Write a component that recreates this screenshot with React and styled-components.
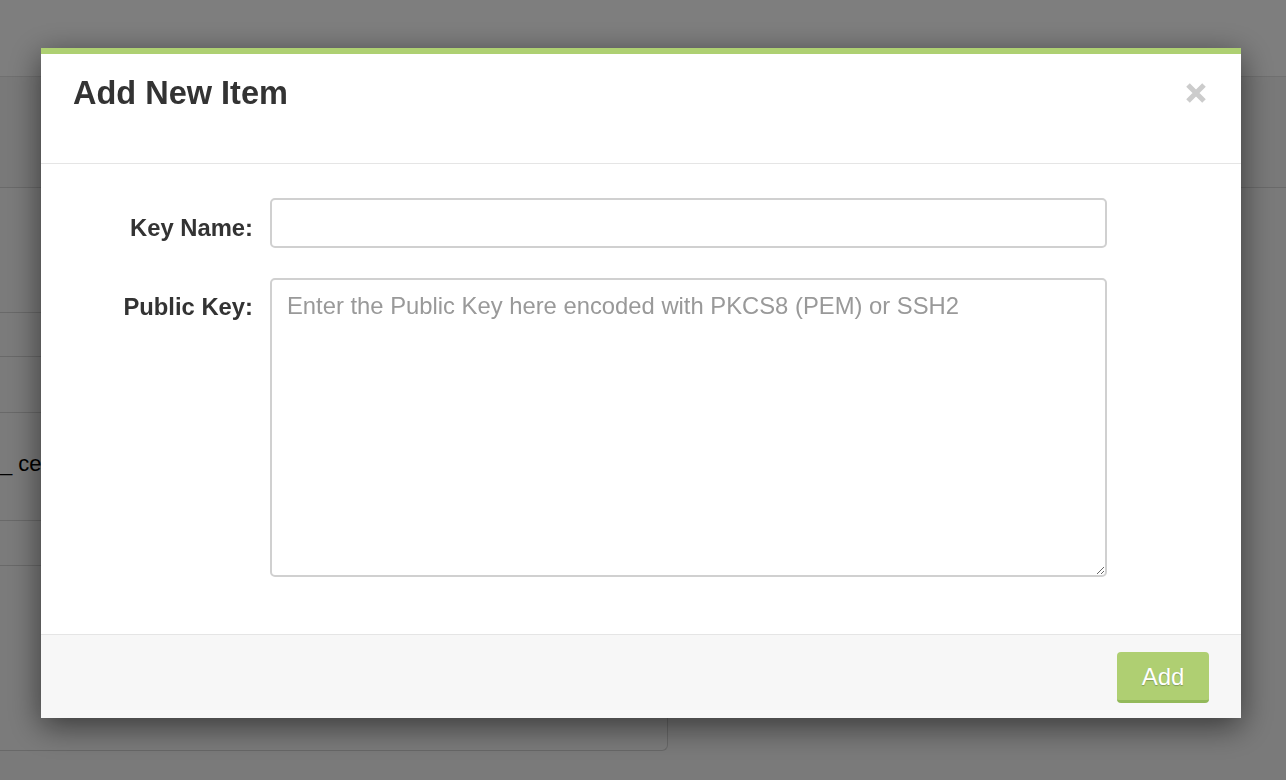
import React from "react";
import styled, { createGlobalStyle } from "styled-components";

const Global = createGlobalStyle`
  html, body { margin: 0; padding: 0; }
  body {
    font-family: "Liberation Sans", Arial, Helvetica, sans-serif;
    background: #fff;
    width: 1286px;
    height: 780px;
    overflow: hidden;
  }
  * { box-sizing: border-box; }
`;

const Page = styled.div`
  width: 1286px;
  height: 780px;
  display: flex;
  flex-direction: column;
  background: #f4f4f4;
`;

const TopBar = styled.div`
  height: 77px;
  flex: none;
  background: #fdfdfd;
  border-bottom: 1px solid #e0e0e0;
`;

const SubBar = styled.div`
  height: 111px;
  flex: none;
  background: #f2f2f2;
  border-bottom: 1px solid #d4d4d4;
`;

const Content = styled.div`
  flex: 1;
  display: flex;
`;

const Panel = styled.div`
  width: 668px;
  height: 563px;
  background: #f6f6f6;
  border: 1px solid #d0d0d0;
  border-left: none;
  border-top: none;
  border-radius: 0 0 6px 0;
  display: flex;
  flex-direction: column;
`;

const PanelRow = styled.div`
  height: ${(p) => p.$h}px;
  flex: none;
  border-bottom: 1px solid #d2d2d2;
  display: flex;
  align-items: center;
  font-size: 22px;
  color: #000;
  padding-bottom: 6px;
`;

const Overlay = styled.div`
  position: fixed;
  inset: 0;
  background: rgba(0, 0, 0, 0.5);
`;

const Modal = styled.div`
  position: fixed;
  left: 41px;
  top: 48px;
  width: 1200px;
  background: #fff;
  border-top: 6px solid #aed072;
  box-shadow: 0 8px 30px rgba(0, 0, 0, 0.55);
  display: flex;
  flex-direction: column;
`;

const Header = styled.div`
  height: 110px;
  border-bottom: 1px solid #e5e5e5;
  display: flex;
  justify-content: space-between;
  align-items: flex-start;
  padding: 22px 32px 0 32px;
`;

const Title = styled.h4`
  margin: 0;
  font-size: 32.5px;
  line-height: 34px;
  font-weight: 700;
  color: #333;
`;

const Close = styled.button`
  border: none;
  background: none;
  padding: 0;
  margin-top: 6px;
  margin-right: 2px;
  width: 22px;
  height: 22px;
  cursor: pointer;
  display: flex;
`;

const Body = styled.div`
  height: 470px;
  padding: 34px 134px 0 0;
  display: grid;
  grid-template-columns: 212px 1fr;
  column-gap: 17px;
  row-gap: 30px;
  align-content: start;
`;

const Label = styled.label`
  text-align: right;
  font-size: 23.8px;
  font-weight: 700;
  line-height: 26px;
  color: #333;
  padding-top: ${(p) => p.$pt}px;
`;

const Input = styled.input`
  height: 50px;
  width: 100%;
  border: 2px solid #d0d0d0;
  border-radius: 5px;
  font-family: inherit;
  font-size: 23.8px;
  padding: 0 16px;
  outline: none;
`;

const TextArea = styled.textarea`
  height: 299px;
  width: 100%;
  border: 2px solid #d0d0d0;
  border-radius: 5px;
  font-family: inherit;
  font-size: 23.8px;
  line-height: 31px;
  padding: 10px 15px;
  outline: none;
  resize: vertical;
  &::placeholder {
    color: #999;
  }
`;

const Footer = styled.div`
  height: 84px;
  background: #f7f7f7;
  border-top: 1px solid #e5e5e5;
  display: flex;
  justify-content: flex-end;
  align-items: flex-start;
  padding: 17px 32px 0 0;
`;

const AddButton = styled.button`
  width: 92px;
  height: 51px;
  background: #afcf72;
  border: none;
  border-bottom: 3px solid #93b95a;
  border-radius: 4px;
  color: #fff;
  font-family: inherit;
  font-size: 24px;
  text-shadow: 0 1px 1px rgba(0, 0, 0, 0.25);
  padding: 2px 0 0;
  cursor: pointer;
`;

export default function App() {
  return (
    <>
      <Global />
      <Page>
        <TopBar />
        <SubBar />
        <Content>
          <Panel>
            <PanelRow $h={125} />
            <PanelRow $h={44} />
            <PanelRow $h={56} />
            <PanelRow $h={108}>_ ce</PanelRow>
            <PanelRow $h={45} />
          </Panel>
        </Content>
      </Page>
      <Overlay />
      <Modal>
        <Header>
          <Title>Add New Item</Title>
          <Close aria-label="Close">
            <svg width="22" height="22" viewBox="0 0 22 22">
              <path d="M3 3 L19 19 M19 3 L3 19" stroke="#cccccc" strokeWidth="5" />
            </svg>
          </Close>
        </Header>
        <Body>
          <Label $pt={17}>Key Name:</Label>
          <Input type="text" />
          <Label $pt={16}>Public Key:</Label>
          <TextArea placeholder="Enter the Public Key here encoded with PKCS8 (PEM) or SSH2" />
        </Body>
        <Footer>
          <AddButton>Add</AddButton>
        </Footer>
      </Modal>
    </>
  );
}
